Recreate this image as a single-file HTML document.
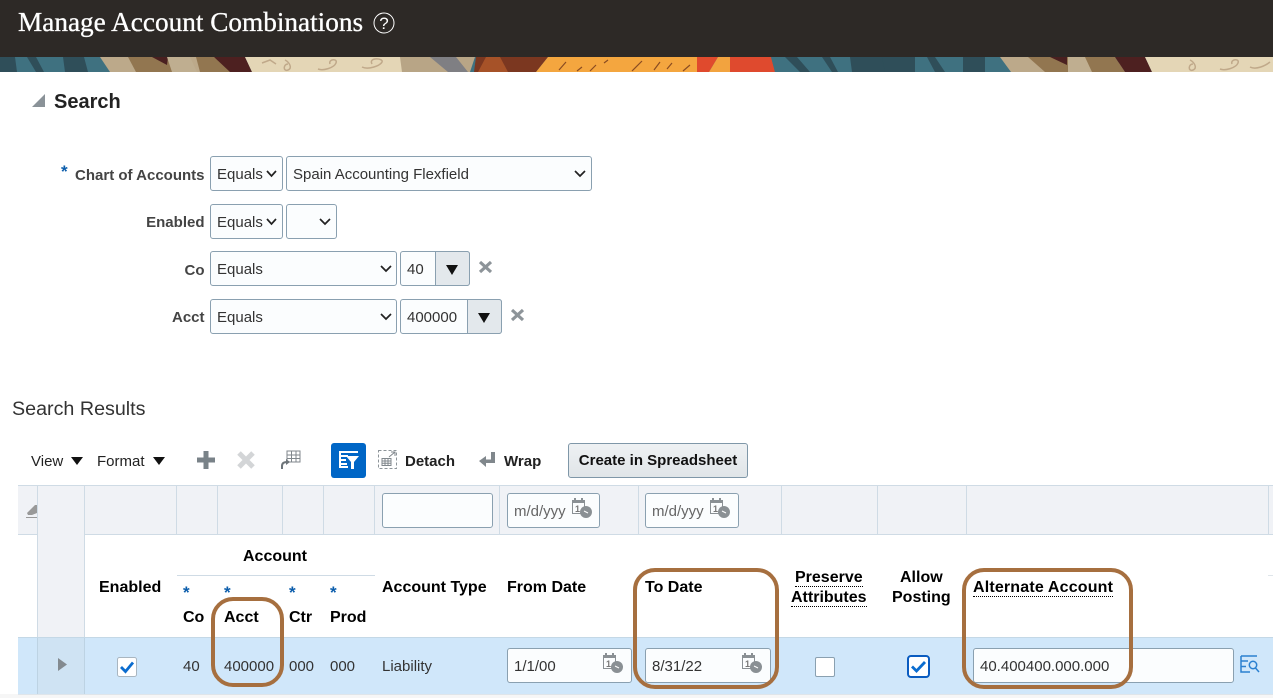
<!DOCTYPE html>
<html><head><meta charset="utf-8">
<style>
html,body{margin:0;padding:0;background:#fff}
body{position:relative;width:1273px;height:698px;overflow:hidden;font-family:"Liberation Sans",sans-serif;color:#111}
div,span.a{position:absolute;box-sizing:border-box}
.t{position:absolute;white-space:nowrap;line-height:20px;margin-top:1px}
.h{font-weight:bold;font-size:16px;color:#000;margin-top:3px}
.l{font-weight:bold;font-size:15px;color:#444;text-align:right;right:1068.5px}
.f{background:#fbfdfe;border:1px solid #8aa0b0;border-radius:3px;font-size:15px;color:#333;line-height:35px;padding-left:6px;white-space:nowrap}
.v{font-size:15px;color:#333}
.g{background:#cfdbe5;width:1px;top:485px;height:49px}
.star{color:#0a5cab;font-weight:bold;font-size:17px;margin-top:0}
.u{border-bottom:1px dotted #000}
.box{border:4px solid #a66f3f;border-radius:22px}
svg{position:absolute;overflow:visible}
</style></head><body>
<div style="left:0;top:0;width:1273px;height:57px;background:#2d2926"></div>
<svg style="left:0;top:57px" width="1273" height="15" viewBox="0 0 1273 15">
<rect width="1273" height="15" fill="#3f7180"/>
<polygon points="0,0 15,0 17,15 0,15" fill="#2f4e59"/>
<polygon points="27,0 36,0 44,15 36,15" fill="#2f4e59"/>
<polygon points="63,0 84,0 88,15 65,15" fill="#2f4e59"/>
<polygon points="100,0 240,0 250,15 110,15" fill="#bca98a"/>
<polygon points="128,0 178,0 196,15 136,15" fill="#927650"/>
<polygon points="152,0 168,0 167,8" fill="#4a2020"/>
<polygon points="167,0 190,0 197,15 172,15" fill="#bfae90"/>
<polygon points="196,0 214,0 234,15 200,15" fill="#927650"/>
<polygon points="214,0 245,0 252,15 230,15" fill="#4d2020"/>
<polygon points="245,0 402,0 402,15 252,15" fill="#e4d6b6"/>
<g fill="none" stroke="#c0a98a" stroke-width="1.5"><path d="M285 3c4 2 8 8 3 10s-5-6 0-6"/><path d="M318 12c5 2 16-1 18-6s-8-4-6 1"/><path d="M362 10c6 3 18-1 20-5s-14-5-10 2"/><path d="M262 6l8-3 6 4"/></g>
<polygon points="400,0 475,0 470,15 402,15" fill="#b8a586"/>
<polygon points="430,0 456,0 468,15 448,15" fill="#7f7f83"/>
<polygon points="476,0 548,0 536,15 474,15" fill="#7b3720"/>
<polygon points="486,0 500,0 508,15 478,15" fill="#a65228"/>
<polygon points="548,0 697,0 697,15 536,15" fill="#f4a63f"/>
<g stroke="#8a4c22" stroke-width="1.2"><path d="M566 5l-7 8M582 10l-5 4M596 8l-6 6M608 3l-4 3M642 4l-10 10M660 5l-6 8M672 6l-5 6M690 8l-7 6"/></g>
<polygon points="697,0 718,0 709,15 697,15" fill="#e04a2d"/>
<polygon points="718,0 730,0 730,15 709,15" fill="#f2a33f"/>
<polygon points="730,0 771,0 775,15 730,15" fill="#df4a2e"/>
<polygon points="771,0 1005,0 1011,15 775,15" fill="#3f7180"/>
<polygon points="785,0 797,0 810,15 800,15" fill="#2f4e59"/>
<polygon points="822,0 830,0 838,15 832,15" fill="#2f4e59"/>
<polygon points="850,0 885,0 900,15 852,15" fill="#2f4e59"/>
<polygon points="915,0 915,15 885,15 882,0" fill="#2f4e59"/>
<polygon points="927,0 935,0 945,15 935,15" fill="#2f4e59"/>
<polygon points="963,0 985,0 985,15 963,15" fill="#2f4e59"/>
<polygon points="1000,0 1100,0 1150,15 1011,15" fill="#bca98a"/>
<polygon points="1028,0 1068,0 1068,15 1045,15" fill="#927650"/>
<polygon points="1050,0 1067,0 1067,8" fill="#4a2020"/>
<polygon points="1068,0 1085,0 1092,15 1068,15" fill="#bfae90"/>
<polygon points="1085,0 1115,0 1125,15 1092,15" fill="#927650"/>
<polygon points="1115,0 1145,0 1152,15 1125,15" fill="#4d2020"/>
<polygon points="1145,0 1273,0 1273,15 1152,15" fill="#e4d6b6"/>
<g fill="none" stroke="#c0a98a" stroke-width="1.5"><path d="M1190 3c4 2 8 8 3 10s-5-6 0-6"/><path d="M1220 12c5 2 16-1 18-6s-8-4-6 1"/><path d="M1250 10c6 3 15-1 20-5"/></g>
</svg>
<span class="t" style="left:18px;top:8px;margin-top:0;line-height:28px;font-family:'Liberation Serif',serif;font-size:27.25px;color:#fff;-webkit-text-stroke:.3px #fff">Manage Account Combinations</span>
<svg style="left:373px;top:12px" width="22" height="22" viewBox="0 0 22 22"><circle cx="11" cy="11" r="10" fill="none" stroke="#fff" stroke-width="1"/><text x="11" y="17" text-anchor="middle" font-family="Liberation Sans" font-size="17" fill="#fff">?</text></svg>

<svg style="left:32px;top:94px" width="14" height="13"><polygon points="13,0 13,13 0,13" fill="#8a9298"/></svg>
<span class="t" style="left:54px;top:91px;font-size:20px;font-weight:bold;color:#222">Search</span>

<span class="t star" style="left:61px;top:162px">*</span>
<span class="t l" style="top:165px">Chart of Accounts</span>
<span class="t l" style="top:212px">Enabled</span>
<span class="t l" style="top:260px">Co</span>
<span class="t l" style="top:307px">Acct</span>

<div class="f" style="left:210px;top:156px;width:73px;height:35px">Equals</div>
<div class="f" style="left:286px;top:156px;width:306px;height:35px">Spain Accounting Flexfield</div>
<div class="f" style="left:210px;top:204px;width:73px;height:35px">Equals</div>
<div class="f" style="left:286px;top:204px;width:51px;height:35px"></div>
<div class="f" style="left:210px;top:251px;width:187px;height:35px">Equals</div>
<div class="f" style="left:400px;top:251px;width:70px;height:35px">40</div>
<div style="left:435px;top:251px;width:35px;height:35px;background:#e3e8ec;border:1px solid #8aa0b0;border-radius:0 3px 3px 0"></div>
<div class="f" style="left:210px;top:299px;width:187px;height:35px">Equals</div>
<div class="f" style="left:400px;top:299px;width:102px;height:35px">400000</div>
<div style="left:467px;top:299px;width:35px;height:35px;background:#e3e8ec;border:1px solid #8aa0b0;border-radius:0 3px 3px 0"></div>
<svg style="left:0;top:0" width="1273" height="400">
<g fill="none" stroke="#222" stroke-width="1.7"><path d="M267 171l4.500 5 4.500-5M267 219l4.500 5 4.500-5M575 171l5 5 5-5M320 219l5 5 5-5M381 266l5 5 5-5M381 314l5 5 5-5"/></g>
<polygon points="446,265 458,265 452,275" fill="#111"/><polygon points="478,313 490,313 484,323" fill="#111"/>
<g stroke="#8d9499" stroke-width="3.200"><path d="M480 262l11 10M491 262l-11 10M512 310l11 10M523 310l-11 10"/></g>
</svg>

<span class="t" style="left:12px;top:398px;font-size:19.7px;color:#333">Search Results</span>

<!-- toolbar -->
<span class="t" style="left:31px;top:451px;font-size:15px;color:#222">View</span>
<svg style="left:71px;top:457px" width="12" height="8"><polygon points="0,0 12,0 6,8" fill="#111"/></svg>
<span class="t" style="left:97px;top:451px;font-size:15px;color:#222">Format</span>
<svg style="left:153px;top:457px" width="12" height="8"><polygon points="0,0 12,0 6,8" fill="#111"/></svg>
<svg style="left:197px;top:451px" width="18" height="18"><path d="M6.500 0h5v6.500h6.500v5h-6.500v6.500h-5v-6.500h-6.500v-5h6.500z" fill="#798288"/></svg>
<svg style="left:237px;top:451px" width="18" height="18"><path d="M2 2l14 14M16 2l-14 14" stroke="#d3d5d7" stroke-width="5"/></svg>
<svg style="left:281px;top:450px" width="20" height="20" viewBox="0 0 20 20"><g fill="none" stroke="#80878c" stroke-width="1"><rect x="6" y="1" width="13" height="11"/><path d="M6 5h13M6 8.500h13M10.500 1v11M15 1v11"/></g><path d="M1 19v-3c0-3 2-4 5-4" fill="none" stroke="#6d7479" stroke-width="2"/><polygon points="5,9 9,12 5,15" fill="#6d7479"/></svg>
<div style="left:331px;top:443px;width:35px;height:35px;background:#0066c6;border-radius:3px"></div>
<svg style="left:331px;top:443px" width="35" height="35" viewBox="0 0 35 35"><g fill="#fff"><rect x="8" y="8" width="19" height="2"/><rect x="8" y="8" width="2" height="16"/><rect x="8" y="12" width="9" height="2"/><rect x="8" y="16" width="7" height="2"/><rect x="8" y="20" width="8" height="2"/><rect x="8" y="23" width="9" height="2"/><polygon points="15,13 28,13 23,19 23,26 20,26 20,19"/></g></svg>
<svg style="left:378px;top:450px" width="20" height="20" viewBox="0 0 20 20"><rect x=".5" y=".5" width="18" height="18" fill="none" stroke="#8d9499" stroke-dasharray="3 2"/><g fill="none" stroke="#80878c"><rect x="4" y="8.500" width="9" height="7"/><path d="M4 11h9M4 13.300h9M7 8.500v7M10 8.500v7"/></g><path d="M11 7l6-5M13 2h4v4" fill="none" stroke="#80878c"/></svg>
<span class="t" style="left:405px;top:451px;font-size:15px;font-weight:bold;color:#222">Detach</span>
<svg style="left:479px;top:451px" width="17" height="17" viewBox="0 0 17 17"><path d="M12 1h4v11H7v4L0 10l7-5v3.500h5z" fill="#80878c"/></svg>
<span class="t" style="left:504px;top:451px;font-size:15px;font-weight:bold;color:#222">Wrap</span>
<div style="left:568px;top:443px;width:180px;height:35px;background:linear-gradient(#eef1f3,#e0e5e8);border:1px solid #7f97a8;border-radius:3px;font-size:15px;font-weight:bold;color:#111;line-height:33px;text-align:center;white-space:nowrap">Create in Spreadsheet</div>

<!-- table -->
<div style="left:18px;top:485px;width:1255px;height:50px;background:#f0f2f6;border-top:1px solid #cfdbe5;border-bottom:1px solid #cfdbe5"></div>
<div class="g" style="left:37px"></div><div class="g" style="left:84px"></div><div class="g" style="left:176px"></div><div class="g" style="left:217px"></div><div class="g" style="left:282px"></div><div class="g" style="left:323px"></div><div class="g" style="left:374px"></div><div class="g" style="left:499px"></div><div class="g" style="left:638px"></div><div class="g" style="left:781px"></div><div class="g" style="left:877px"></div><div class="g" style="left:966px"></div><div class="g" style="left:1268px"></div>
<svg style="left:26px;top:503px" width="12" height="16" viewBox="0 0 12 16"><polygon points="1,10 9,2 11,2 11,10 6,12 2,12" fill="#999"/><rect y="14" width="11" height="1" fill="#999"/></svg>

<div style="left:37px;top:534px;width:48px;height:104px;background:#f0f2f6;border-left:1px solid #cfdbe5;border-right:1px solid #cfdbe5"></div>
<div style="left:177px;top:575px;width:198px;height:1px;background:#cfdbe5"></div>
<div style="left:1268px;top:575px;width:5px;height:1px;background:#dfe5ea"></div>

<div class="f" style="left:382px;top:493px;width:111px;height:35px"></div>
<div class="f" style="left:507px;top:493px;width:93px;height:35px;color:#666">m/d/yyy</div>
<div class="f" style="left:645px;top:493px;width:94px;height:35px;color:#666">m/d/yyy</div>

<span class="t h" style="left:243px;top:544px">Account</span>
<span class="t h" style="left:99px;top:575px">Enabled</span>
<span class="t star" style="left:183px;top:583px">*</span><span class="t star" style="left:224px;top:583px">*</span><span class="t star" style="left:289px;top:583px">*</span><span class="t star" style="left:330px;top:583px">*</span>
<span class="t h" style="left:183px;top:605px">Co</span>
<span class="t h" style="left:224px;top:605px">Acct</span>
<span class="t h" style="left:289px;top:605px">Ctr</span>
<span class="t h" style="left:330px;top:605px">Prod</span>
<span class="t h" style="left:382px;top:575px">Account Type</span>
<span class="t h" style="left:507px;top:575px">From Date</span>
<span class="t h" style="left:645px;top:575px">To Date</span>
<span class="t h u" style="left:795px;top:565px;height:18px">Preserve</span>
<span class="t h u" style="left:791px;top:585px;height:18px">Attributes</span>
<span class="t h" style="left:900px;top:565px">Allow</span>
<span class="t h" style="left:892px;top:585px">Posting</span>
<span class="t h u" style="left:973px;top:575px;height:18px;letter-spacing:.17px">Alternate Account</span>

<div style="left:18px;top:637px;width:1255px;height:57px;background:#d0e7fa;border-top:1px solid #c4d8e6"></div>
<div style="left:37px;top:638px;width:48px;height:56px;background:#cfe3f3;border-left:1px solid #bdd3e3;border-right:1px solid #bdd3e3"></div>
<div style="left:0;top:694px;width:1273px;height:4px;background:#f6f6f6"></div>
<div style="left:18px;top:694px;width:1255px;height:1px;background:#dfe5ea"></div>
<svg style="left:58px;top:658px" width="9" height="13"><polygon points="0,0 9,6.500 0,13" fill="#838a8f"/></svg>

<svg style="left:117px;top:657px" width="20" height="20" viewBox="0 0 20 20"><rect x=".5" y=".5" width="19" height="19" rx="2" fill="#fff" stroke="#a9b6c0"/><path d="M4 10l4.500 4.500L16 5.500" fill="none" stroke="#0a6ccf" stroke-width="2.800"/></svg>
<span class="t v" style="left:183px;top:656px">40</span>
<span class="t v" style="left:224px;top:656px">400000</span>
<span class="t v" style="left:289px;top:656px">000</span>
<span class="t v" style="left:330px;top:656px">000</span>
<span class="t v" style="left:382px;top:656px">Liability</span>
<div class="f" style="left:507px;top:648px;width:125px;height:35px">1/1/00</div>
<div class="f" style="left:645px;top:648px;width:126px;height:35px">8/31/22</div>
<div style="left:815px;top:657px;width:20px;height:20px;background:#fff;border:1px solid #8aa0b0;border-radius:2px"></div>
<svg style="left:907px;top:655px" width="23" height="23" viewBox="0 0 23 23"><rect x="1" y="1" width="21" height="21" rx="3" fill="#fff" stroke="#0a5cc0" stroke-width="2"/><path d="M5 11.500l4.500 4.500L18 7" fill="none" stroke="#0a6ccf" stroke-width="2.800"/></svg>
<div class="f" style="left:973px;top:648px;width:261px;height:35px">40.400400.000.000</div>
<svg style="left:1240px;top:654px" width="20" height="21" viewBox="0 0 20 21" fill="none" stroke="#2a80d0" stroke-width="1.500"><path d="M1 2h16M1 2v16h9M1 7h7M1 12.500h5"/><circle cx="13" cy="11" r="3.700"/><path d="M15.500 14l3.500 4"/></svg>

<svg style="left:571px;top:497px" width="24" height="26" viewBox="0 0 24 26"><g fill="none" stroke="#8a9094"><rect x="1.500" y="3.500" width="12" height="13"/></g><rect x="1" y="3" width="13" height="3" fill="#8a9094"/><rect x="3" y="1" width="2" height="4" fill="#8a9094"/><rect x="10" y="1" width="2" height="4" fill="#8a9094"/><text x="4" y="15" font-family="Liberation Sans" font-size="9" font-weight="bold" fill="#777">1</text><circle cx="15" cy="15" r="6" fill="#8a9094"/><path d="M13 14l4 2" stroke="#fff"/></svg>
<svg style="left:709px;top:497px" width="24" height="26" viewBox="0 0 24 26"><g fill="none" stroke="#8a9094"><rect x="1.500" y="3.500" width="12" height="13"/></g><rect x="1" y="3" width="13" height="3" fill="#8a9094"/><rect x="3" y="1" width="2" height="4" fill="#8a9094"/><rect x="10" y="1" width="2" height="4" fill="#8a9094"/><text x="4" y="15" font-family="Liberation Sans" font-size="9" font-weight="bold" fill="#777">1</text><circle cx="15" cy="15" r="6" fill="#8a9094"/><path d="M13 14l4 2" stroke="#fff"/></svg>
<svg style="left:602px;top:652px" width="24" height="26" viewBox="0 0 24 26"><g fill="none" stroke="#8a9094"><rect x="1.500" y="3.500" width="12" height="13"/></g><rect x="1" y="3" width="13" height="3" fill="#8a9094"/><rect x="3" y="1" width="2" height="4" fill="#8a9094"/><rect x="10" y="1" width="2" height="4" fill="#8a9094"/><text x="4" y="15" font-family="Liberation Sans" font-size="9" font-weight="bold" fill="#777">1</text><circle cx="15" cy="15" r="6" fill="#8a9094"/><path d="M13 14l4 2" stroke="#fff"/></svg>
<svg style="left:741px;top:652px" width="24" height="26" viewBox="0 0 24 26"><g fill="none" stroke="#8a9094"><rect x="1.500" y="3.500" width="12" height="13"/></g><rect x="1" y="3" width="13" height="3" fill="#8a9094"/><rect x="3" y="1" width="2" height="4" fill="#8a9094"/><rect x="10" y="1" width="2" height="4" fill="#8a9094"/><text x="4" y="15" font-family="Liberation Sans" font-size="9" font-weight="bold" fill="#777">1</text><circle cx="15" cy="15" r="6" fill="#8a9094"/><path d="M13 14l4 2" stroke="#fff"/></svg>

<div class="box" style="left:211px;top:597px;width:73px;height:90px"></div>
<div class="box" style="left:633px;top:568px;width:146px;height:121px"></div>
<div class="box" style="left:962px;top:568px;width:171px;height:121px"></div>
</body></html>
